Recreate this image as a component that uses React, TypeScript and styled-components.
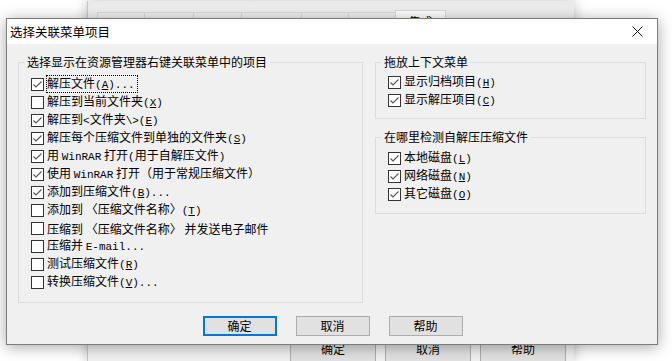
import React from 'react';
import styled, { createGlobalStyle } from 'styled-components';

const GlobalStyle = createGlobalStyle`
  html, body {
    margin: 0;
    padding: 0;
    background: #ffffff;
    overflow: hidden;
  }
  body {
    font-family: "Noto Sans CJK SC", "Microsoft YaHei", sans-serif;
    font-size: 12px;
    color: #000;
  }
`;

const Desktop = styled.div`
  position: relative;
  width: 672px;
  height: 361px;
  overflow: hidden;
  background: #ffffff;
`;

// the settings window that sits behind the dialog
const BackWindow = styled.div`
  position: absolute;
  left: 87px;
  top: 1px;
  width: 487px;
  height: 360px;
  box-sizing: border-box;
  background: linear-gradient(#e9e9e9, #f0f0f0 12px);
  border-left: 1px solid #c6c6c6;
  box-shadow: 0 0 12px rgba(0, 0, 0, 0.25);
  display: flex;
  flex-direction: column;
`;

const TabStrip = styled.div`
  display: flex;
  align-items: flex-end;
  padding: 9px 0 0 9px;
`;

const Tab = styled.div<{ $w: number; $active?: boolean }>`
  width: ${p => p.$w}px;
  height: ${p => (p.$active ? 24 : 22)}px;
  box-sizing: border-box;
  border: 1px solid #d9d9d9;
  border-bottom: none;
  margin-right: -1px;
  padding-top: 2px;
  background: ${p => (p.$active ? '#ffffff' : '#f0f0f0')};
  text-align: center;
  line-height: 18px;
  font-size: 12px;
  color: #000;
`;

const BackButtons = styled.div`
  margin-top: auto;
  display: flex;
  justify-content: flex-end;
  gap: 9px;
  padding: 0 8px 0 0;
`;

const BackButton = styled.div`
  width: 86px;
  height: 24px;
  box-sizing: border-box;
  background: #e1e1e1;
  border: 1px solid #adadad;
  border-bottom: none;
  text-align: center;
  line-height: 22px;
`;

const Dialog = styled.div`
  position: absolute;
  left: 6px;
  top: 18px;
  width: 652px;
  height: 327px;
  box-sizing: border-box;
  border: 1px solid #7c7c7c;
  background: #f0f0f0;
  box-shadow: 0 2px 14px rgba(0, 0, 0, 0.35);
  display: flex;
  flex-direction: column;
`;

const TitleBar = styled.div`
  height: 25px;
  flex: none;
  background: #ffffff;
  display: flex;
  align-items: center;
  justify-content: space-between;
  padding: 0 14px 0 3px;
`;

const Title = styled.span`
  font-size: 12.5px;
  line-height: 25px;
`;

const Body = styled.div`
  flex: 1;
  display: flex;
  flex-direction: column;
  padding: 10px 10px 8px 11px;
`;

const Columns = styled.div`
  display: flex;
  gap: 12px;
  align-items: flex-start;
`;

const RightColumn = styled.div`
  display: flex;
  flex-direction: column;
  gap: 10px;
  width: 271px;
`;

const Group = styled.fieldset<{ $w?: number; $h: number }>`
  margin: 0;
  padding: 0;
  box-sizing: border-box;
  ${p => (p.$w ? `width: ${p.$w}px;` : '')}
  height: ${p => p.$h}px;
  border: 1px solid #dcdcdc;
  min-width: 0;
`;

const Legend = styled.legend`
  margin-left: 5px;
  padding: 0 3px 0 3px;
  line-height: 16px;
  font-size: 12px;
`;

const List = styled.div<{ $top: number }>`
  display: flex;
  flex-direction: column;
  padding: ${p => p.$top}px 0 0 12px;
`;

const Row = styled.div`
  display: flex;
  align-items: center;
  height: 18px;
  gap: 3px;
  white-space: nowrap;
`;

const Box = styled.span`
  width: 13px;
  height: 13px;
  box-sizing: border-box;
  border: 1px solid #333333;
  background: #ffffff;
  flex: none;
  display: flex;
  align-items: center;
  justify-content: center;
`;

const Text = styled.span<{ $focus?: boolean }>`
  line-height: 13px;
  outline: ${p => (p.$focus ? '1px dotted #000' : 'none')};
  outline-offset: 0;
  padding-right: 2px;
`;

const Latin = styled.span`
  font-family: "Liberation Mono", monospace;
  font-size: 11px;
`;

const ButtonRow = styled.div`
  margin-top: auto;
  display: flex;
  justify-content: center;
  gap: 19px;
`;

const Button = styled.button<{ $default?: boolean }>`
  width: 74px;
  height: 20px;
  box-sizing: border-box;
  padding: 0;
  font-family: inherit;
  font-size: 12px;
  line-height: 16px;
  color: #000;
  background: #e1e1e1;
  border: ${p => (p.$default ? '2px solid #0078d7' : '1px solid #adadad')};
`;

function Check() {
  return (
    <svg width="11" height="11" viewBox="0 0 11 11">
      <path d="M1.5 5.5 L4 8 L9.5 2.5" fill="none" stroke="#555" strokeWidth="1.1" />
    </svg>
  );
}

function CloseIcon() {
  return (
    <svg width="11" height="11" viewBox="0 0 11 11">
      <path d="M0.5 0.5 L10.5 10.5 M10.5 0.5 L0.5 10.5" stroke="#111" strokeWidth="1" />
    </svg>
  );
}

type Item = {
  label: React.ReactNode;
  checked: boolean;
  focus?: boolean;
};

// accelerator key, e.g. (A)
const Key = ({ k, dots }: { k: string; dots?: boolean }) => (
  <Latin>(<u>{k}</u>){dots ? '...' : ''}</Latin>
);

const explorerItems: Item[] = [
  { label: <>解压文件<Key k="A" dots /></>, checked: true, focus: true },
  { label: <>解压到当前文件夹<Key k="X" /></>, checked: false },
  { label: <>解压到<Latin>&lt;</Latin>文件夹<Latin>\&gt;</Latin><Key k="E" /></>, checked: true },
  { label: <>解压每个压缩文件到单独的文件夹<Key k="S" /></>, checked: true },
  { label: <>用 <Latin>WinRAR</Latin> 打开<Latin>(</Latin>用于自解压文件<Latin>)</Latin></>, checked: true },
  { label: <>使用 <Latin>WinRAR</Latin> 打开（用于常规压缩文件）</>, checked: true },
  { label: <>添加到压缩文件<Key k="B" dots /></>, checked: true },
  { label: <>添加到 〈压缩文件名称〉<Key k="T" /></>, checked: false },
  { label: <>压缩到 〈压缩文件名称〉 并发送电子邮件</>, checked: false },
  { label: <>压缩并 <Latin>E-mail...</Latin></>, checked: false },
  { label: <>测试压缩文件<Key k="R" /></>, checked: false },
  { label: <>转换压缩文件<Key k="V" dots /></>, checked: false },
];

const dragItems: Item[] = [
  { label: <>显示归档项目<Key k="H" /></>, checked: true },
  { label: <>显示解压项目<Key k="C" /></>, checked: true },
];

const sfxItems: Item[] = [
  { label: <>本地磁盘<Key k="L" /></>, checked: true },
  { label: <>网络磁盘<Key k="N" /></>, checked: true },
  { label: <>其它磁盘<Key k="O" /></>, checked: true },
];

const tabs = [
  { name: '常规', w: 48 },
  { name: '压缩', w: 50 },
  { name: '路径', w: 49 },
  { name: '文件列表', w: 61 },
  { name: '查看器', w: 48 },
  { name: '安全', w: 48 },
  { name: '集成', w: 51, active: true },
];

function CheckList({ items, top }: { items: Item[]; top: number }) {
  return (
    <List $top={top}>
      {items.map((item, i) => (
        <Row key={i}>
          <Box>{item.checked && <Check />}</Box>
          <Text $focus={item.focus}>{item.label}</Text>
        </Row>
      ))}
    </List>
  );
}

export default function App() {
  return (
    <>
      <GlobalStyle />
      <Desktop>
        <BackWindow>
          <TabStrip>
            {tabs.map(t => (
              <Tab key={t.name} $w={t.w} $active={t.active}>{t.name}</Tab>
            ))}
          </TabStrip>
          <BackButtons>
            <BackButton>确定</BackButton>
            <BackButton>取消</BackButton>
            <BackButton>帮助</BackButton>
          </BackButtons>
        </BackWindow>

        <Dialog>
          <TitleBar>
            <Title>选择关联菜单项目</Title>
            <CloseIcon />
          </TitleBar>
          <Body>
            <Columns>
              <Group $w={345} $h={249}>
                <Legend>选择显示在资源管理器右键关联菜单中的项目</Legend>
                <CheckList items={explorerItems} top={5} />
              </Group>
              <RightColumn>
                <Group $h={65}>
                  <Legend>拖放上下文菜单</Legend>
                  <CheckList items={dragItems} top={3} />
                </Group>
                <Group $h={85}>
                  <Legend>在哪里检测自解压压缩文件</Legend>
                  <CheckList items={sfxItems} top={4} />
                </Group>
              </RightColumn>
            </Columns>
            <ButtonRow>
              <Button $default>确定</Button>
              <Button>取消</Button>
              <Button>帮助</Button>
            </ButtonRow>
          </Body>
        </Dialog>
      </Desktop>
    </>
  );
}
